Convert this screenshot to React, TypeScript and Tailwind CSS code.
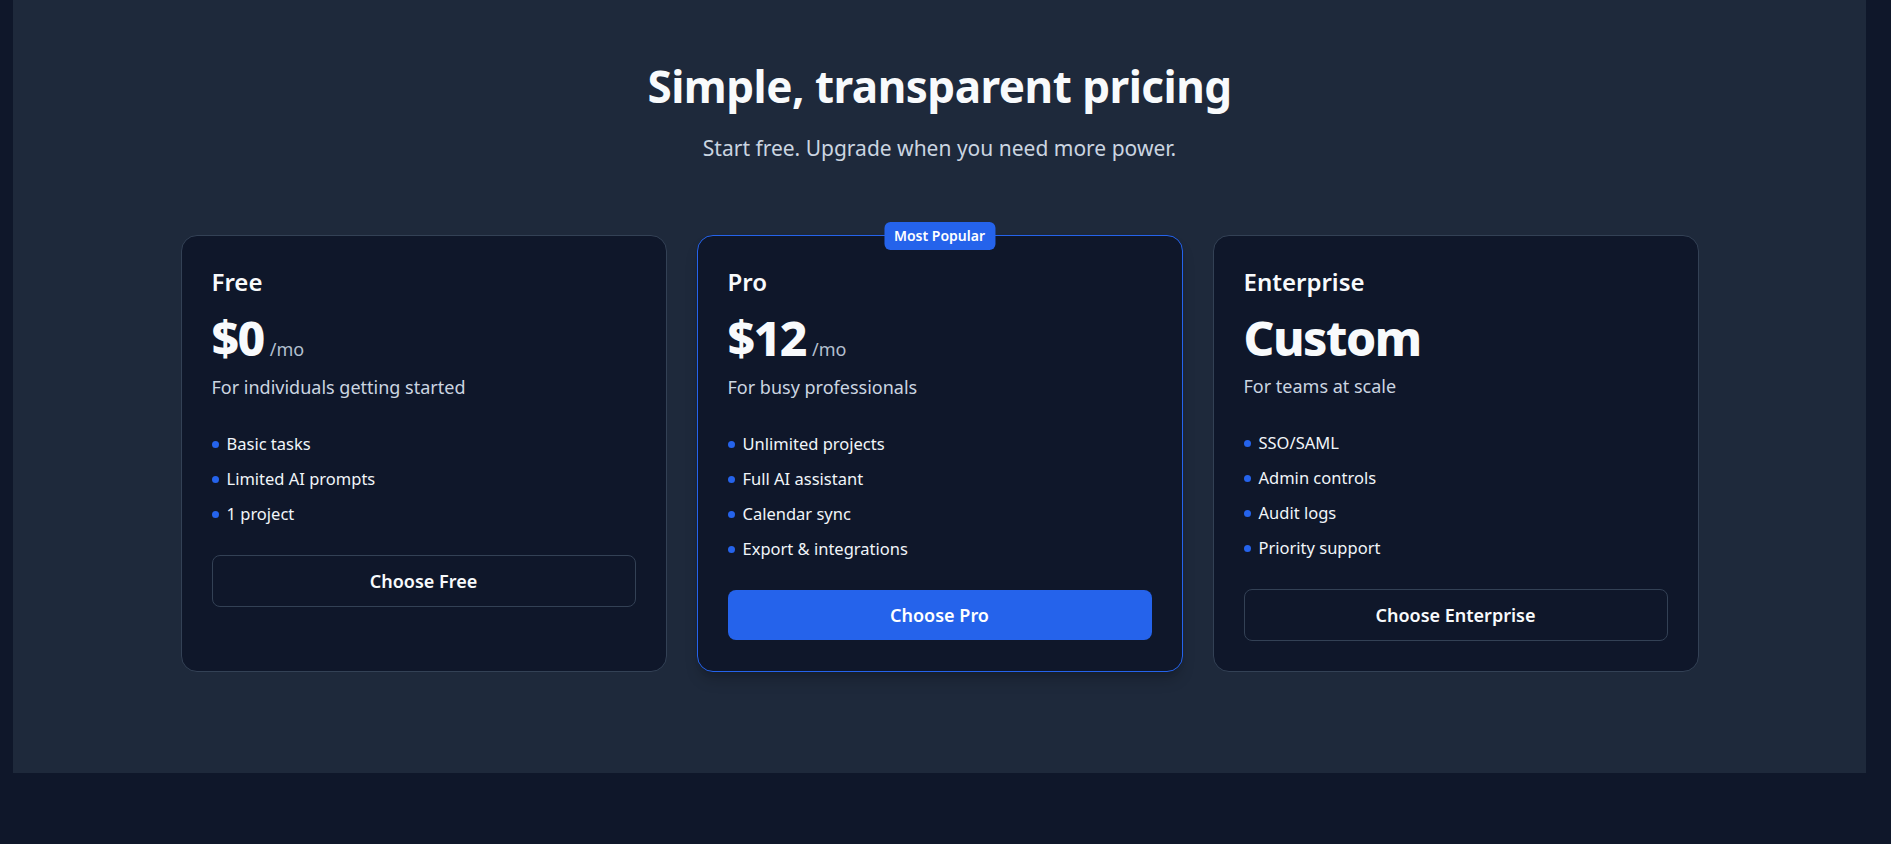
import React from "react";

type Plan = {
  name: string;
  price: string;
  period?: string;
  blurb: string;
  features: string[];
  cta: string;
  popular?: boolean;
};

const plans: Plan[] = [
  {
    name: "Free",
    price: "$0",
    period: "/mo",
    blurb: "For individuals getting started",
    features: ["Basic tasks", "Limited AI prompts", "1 project"],
    cta: "Choose Free",
  },
  {
    name: "Pro",
    price: "$12",
    period: "/mo",
    blurb: "For busy professionals",
    features: [
      "Unlimited projects",
      "Full AI assistant",
      "Calendar sync",
      "Export & integrations",
    ],
    cta: "Choose Pro",
    popular: true,
  },
  {
    name: "Enterprise",
    price: "Custom",
    blurb: "For teams at scale",
    features: ["SSO/SAML", "Admin controls", "Audit logs", "Priority support"],
    cta: "Choose Enterprise",
  },
];

function PlanCard({ plan }: { plan: Plan }) {
  return (
    <div
      className={
        plan.popular
          ? "relative flex flex-col rounded-2xl border border-[#2563eb] bg-[#0f172a] p-[30px] shadow-lg shadow-black/20"
          : "relative flex flex-col rounded-2xl border border-[#334155] bg-[#0f172a] p-[30px]"
      }
    >
      {plan.popular && (
        <span className="absolute -top-[14px] left-1/2 -translate-x-1/2 rounded-md bg-[#2563eb] px-2.5 py-1 text-sm font-semibold leading-5 text-white">
          Most Popular
        </span>
      )}
      <h3 className="text-2xl font-semibold leading-8 text-[#f8fafc]">{plan.name}</h3>
      <div className="mt-4 flex items-baseline gap-1.5">
        <span className="text-5xl font-extrabold leading-none tracking-[-1.5px] text-[#f8fafc]">
          {plan.price}
        </span>
        {plan.period && <span className="text-lg text-[#b4c0cf]">{plan.period}</span>}
      </div>
      <p className="mt-[10px] text-lg leading-7 text-[#cbd5e1]">{plan.blurb}</p>
      <ul className="mt-[31px] flex flex-col gap-[11px]">
        {plan.features.map((f) => (
          <li key={f} className="flex items-center gap-2 text-[16.5px] leading-6 text-[#f1f5f9]">
            <span className="h-[7px] w-[7px] shrink-0 rounded-full bg-[#2563eb]" />
            {f}
          </li>
        ))}
      </ul>
      <button
        className={
          plan.popular
            ? "mt-[29px] h-[50px] w-full rounded-lg bg-[#2563eb] text-lg font-semibold text-white"
            : "mt-[29px] h-[52px] w-full rounded-lg border border-[#334155] bg-[#0f172a] text-lg font-semibold text-[#f8fafc]"
        }
      >
        {plan.cta}
      </button>
    </div>
  );
}

export default function App() {
  return (
    <div
      className="min-h-screen w-full bg-[#0f172a]"
      style={{ fontFamily: '"Noto Sans", "Open Sans", sans-serif' }}
    >
      <section className="ml-[13px] flex w-[1853px] flex-col items-center bg-[#1e293b] pt-[62px] pb-[101px]">
        <h2 className="h-12 text-[44px] font-bold leading-[48px] tracking-[-0.5px] text-[#f8fafc]">
          Simple, transparent pricing
        </h2>
        <p className="mt-6 text-[21px] leading-7 text-[#cbd5e1]">
          Start free. Upgrade when you need more power.
        </p>
        <div className="mt-[73px] grid w-[1518px] grid-cols-3 gap-[30px]">
          {plans.map((p) => (
            <PlanCard key={p.name} plan={p} />
          ))}
        </div>
      </section>
    </div>
  );
}
